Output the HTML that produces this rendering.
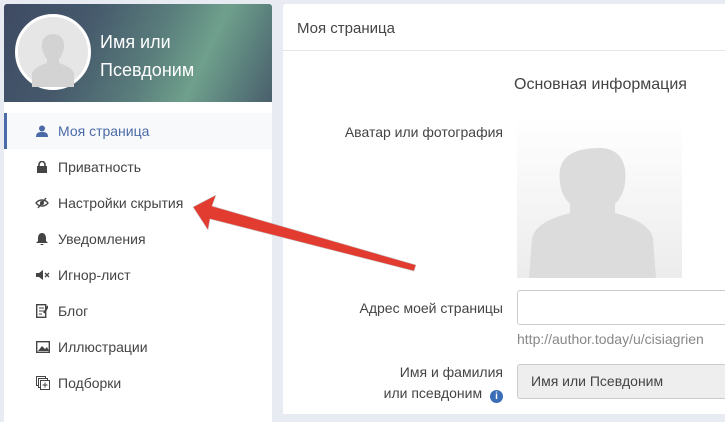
<!DOCTYPE html>
<html><head><meta charset="utf-8"><style>
body{margin:0;width:725px;height:411px;background:#e8ebf2;font-family:"Liberation Sans",sans-serif;position:relative;overflow:hidden}
.card{position:absolute;background:#fff}
.hdr{position:absolute;left:4px;top:4px;width:268px;height:98px;border-radius:3px 3px 0 0;overflow:hidden;
background:linear-gradient(115deg,#3e4a63 0%,#465a6c 30%,#5a7e7c 55%,#6fa08c 72%,#587b7a 88%,#4a5f6c 100%)}
.av{position:absolute;left:11px;top:10px;width:70px;height:70px;border-radius:50%;background:#e6e6e6;border:3px solid #fff}
.name{position:absolute;left:96px;top:24px;color:#fff;font-size:18px;line-height:28px}
.menu{position:absolute;left:4px;top:102px;width:268px;height:320px;background:#fff}
.it{position:absolute;left:0;width:268px;height:36px;font-size:14px;color:#444;line-height:36px}
.it span{position:absolute;left:54px}
.ic{position:absolute;left:32px;top:12px;width:12px;height:12px}
.act{background:#f8f9fb;border-left:3px solid #4a6aa8;width:265px}
.lbl{position:absolute;right:222px;font-size:14px;color:#444;text-align:right}
</style></head><body>
<div class="hdr"><div class="av"><svg width="70" height="70" viewBox="0 0 70 70"><path d="M35 17c8 0 12 6 11 14-1 5-3 9-5 11v4c6 2 13 5 15 10v14H14V56c2-5 9-8 15-10v-4c-2-2-4-6-5-11-1-8 3-14 11-14z" fill="#d3d3d3"/></svg></div>
<div class="name">Имя или<br>Псевдоним</div></div>
<div class="menu">
<div class="it act" style="top:11px"><svg class="ic" style="left:29px" viewBox="0 0 12 12"><circle cx="6" cy="3.5" r="3" fill="#4a6aa8"/><path d="M0 12c0-4 2-5 6-5s6 1 6 5z" fill="#4a6aa8"/></svg><span style="left:51px;color:#4a6aa8">Моя страница</span></div>
<div class="it" style="top:47px"><svg class="ic" viewBox="0 0 12 12"><rect x="1" y="5" width="10" height="7" fill="#444"/><path d="M3 5V3.5a3 3 0 016 0V5" stroke="#444" stroke-width="1.6" fill="none"/></svg><span>Приватность</span></div>
<div class="it" style="top:83px"><svg class="ic" style="width:14px;left:31px" viewBox="0 0 14 12"><path d="M1 6c3-4 9-4 12 0-3 4-9 4-12 0z" stroke="#444" stroke-width="1.4" fill="none"/><circle cx="7" cy="6" r="2" fill="#444"/><path d="M3 11L11 1" stroke="#444" stroke-width="1.4"/></svg><span>Настройки скрытия</span></div>
<div class="it" style="top:119px"><svg class="ic" viewBox="0 0 12 12"><path d="M6 0c3 0 4 3 4 5v3l2 2H0l2-2V5c0-2 1-5 4-5zM4.5 11h3a1.5 1.5 0 01-3 0z" fill="#444"/></svg><span>Уведомления</span></div>
<div class="it" style="top:155px"><svg class="ic" style="width:14px" viewBox="0 0 14 12"><path d="M0 4h3l4-3v10L3 8H0z" fill="#444"/><path d="M9 4l4 4M13 4l-4 4" stroke="#444" stroke-width="1.3"/></svg><span>Игнор-лист</span></div>
<div class="it" style="top:191px"><svg class="ic" style="height:14px;top:11px" viewBox="0 0 12 14"><rect x="0.7" y="0.7" width="9" height="12.6" fill="none" stroke="#444" stroke-width="1.4"/><path d="M3 4h5M3 7h5M3 10h3" stroke="#444"/><path d="M8 9l4-7" stroke="#444" stroke-width="2"/></svg><span>Блог</span></div>
<div class="it" style="top:227px"><svg class="ic" style="width:14px" viewBox="0 0 14 12"><rect x="0.7" y="0.7" width="12.6" height="10.6" fill="none" stroke="#444" stroke-width="1.4"/><path d="M2 10l4-5 3 3 2-2 2 4z" fill="#444"/></svg><span>Иллюстрации</span></div>
<div class="it" style="top:263px"><svg class="ic" style="width:14px;height:14px;top:11px" viewBox="0 0 14 14"><rect x="0.5" y="0.5" width="9" height="9" fill="none" stroke="#444"/><rect x="2.5" y="2.5" width="9" height="9" fill="#fff" stroke="#444"/><rect x="4.5" y="4.5" width="9" height="9" fill="#fff" stroke="#444"/><path d="M9 6.5v5M6.5 9h5" stroke="#444"/></svg><span>Подборки</span></div>
</div>
<div class="card" style="left:283px;top:4px;width:442px;height:410px;border-radius:3px 0 0 0">
<div style="position:absolute;left:14px;top:16px;font-size:15px;color:#444">Моя страница</div>
<div style="position:absolute;left:0;top:46px;width:442px;border-top:1px solid #e5e5e5"></div>
<div style="position:absolute;left:231px;top:72px;font-size:16px;color:#444">Основная информация</div>
</div>
<div class="lbl" style="top:124px">Аватар или фотография</div>
<div style="position:absolute;left:517px;top:117px;width:165px;height:161px;background:linear-gradient(#fff,#ececec)">
<svg width="165" height="161" viewBox="0 0 165 161"><path d="M83 31c18 0 28 13 25 35-1 10-6 17-10 21v9c18 5 34 11 38 25l3 40H12l3-40c4-14 20-20 38-25v-9c-4-4-9-11-10-21-3-22 7-35 40-35z" fill="#dcdcdc"/></svg></div>
<div class="lbl" style="top:300px">Адрес моей страницы</div>
<div style="position:absolute;left:517px;top:290px;width:215px;height:33px;border:1px solid #ccc;border-radius:3px;background:#fff"></div>
<div style="position:absolute;left:517px;top:331px;font-size:14px;color:#888">http://author.today/u/cisiagrien</div>
<div class="lbl" style="top:362px;line-height:21px">Имя и фамилия<br>или псевдоним <span style="display:inline-block;width:13px;height:13px;border-radius:50%;background:#3a6db5;color:#fff;font-size:10px;line-height:13px;text-align:center;font-weight:bold;margin-left:4px;vertical-align:-1px">i</span></div>
<div style="position:absolute;left:517px;top:364px;width:215px;height:33px;border:1px solid #ccc;border-radius:3px;background:#eee;font-size:14px;color:#444;line-height:33px;text-indent:13px">Имя или Псевдоним</div>
<svg style="position:absolute;left:0;top:0" width="725" height="411"><path d="M193 207L216 195L212 206L416 265L414 271L210 219L208 230Z" fill="#e23b30" stroke="#c9c9c9" stroke-width="0.6"/></svg>
</body></html>
